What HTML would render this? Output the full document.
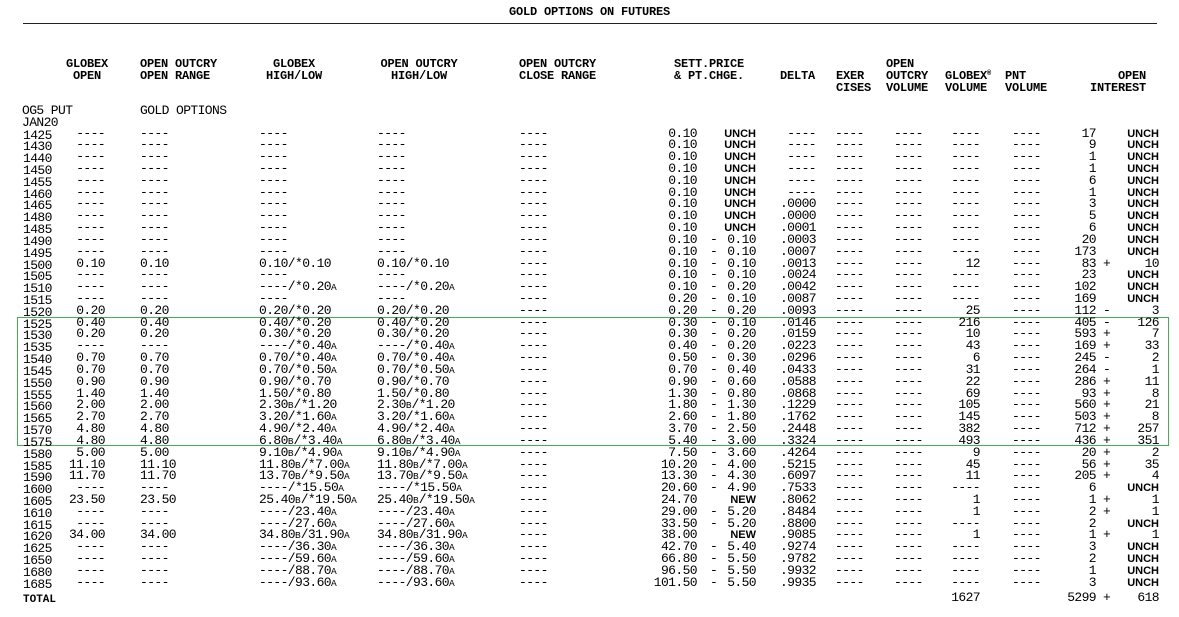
<!DOCTYPE html>
<html><head><meta charset="utf-8">
<style>
*{margin:0;padding:0}
body{width:1179px;height:617px;background:#fff;position:relative;overflow:hidden;font-family:"Liberation Mono",monospace;font-size:13px;letter-spacing:-0.6px;color:#000}
.a{position:absolute;white-space:pre;line-height:12px}
.h{position:absolute;white-space:pre;line-height:12px;font-weight:bold;font-size:12px;letter-spacing:-0.2px}
.r{position:absolute;left:0;width:1179px;height:12px}
.r>*{position:absolute;top:0;white-space:pre;line-height:12px;font-style:normal;font-weight:normal}
.s{left:23px;top:2px!important}
.go{left:45px;width:60px;text-align:right}
.oo{left:140px}
.gh{left:259px}
.oh{left:377px}
.cl{left:519px}
.sp{left:630px;width:67px;text-align:right}
.sg{left:710px}
.ch{left:706px;width:50px;text-align:right}
.de{left:766px;width:50px;text-align:right}
.ex{left:835px}
.ov{left:894px}
.gv{left:930px;width:50px;text-align:right}
.pv{left:1012px}
.oi{left:1046px;width:50px;text-align:right}
.os{left:1103px}
.oc{left:1109px;width:50px;text-align:right}
.u{font-size:11px!important;font-weight:bold!important;font-family:"Liberation Sans",sans-serif;letter-spacing:0}
small{font-size:9.5px;letter-spacing:0}
</style></head><body>
<div class="h" style="left:0;width:1179px;text-align:center;top:6px">GOLD OPTIONS ON FUTURES</div>
<div style="position:absolute;left:23px;top:23px;width:1134px;height:1px;background:#222"></div>

<div class="h" style="left:62px;top:58px;width:50px;text-align:center">GLOBEX
OPEN</div>
<div class="h" style="left:140px;top:58px">OPEN OUTCRY
OPEN RANGE</div>
<div class="h" style="left:264px;top:58px;width:60px;text-align:center">GLOBEX
HIGH/LOW</div>
<div class="h" style="left:379px;top:58px;width:80px;text-align:center">OPEN OUTCRY
HIGH/LOW</div>
<div class="h" style="left:519px;top:58px">OPEN OUTCRY
CLOSE RANGE</div>
<div class="h" style="left:674px;top:58px">SETT.PRICE
&amp; PT.CHGE.</div>
<div class="h" style="left:780px;top:70px">DELTA</div>
<div class="h" style="left:836px;top:70px">EXER
CISES</div>
<div class="h" style="left:886px;top:58px">OPEN
OUTCRY
VOLUME</div>
<div class="h" style="left:945px;top:70px">GLOBEX<span style="font-size:7px;position:relative;top:-4px;line-height:0">®</span>
VOLUME</div>
<div class="h" style="left:1005px;top:70px">PNT
VOLUME</div>
<div class="h" style="left:1086px;top:70px;width:60px;text-align:right">OPEN
INTEREST</div>

<div class="h" style="left:22px;top:105px;font-weight:normal;font-size:13px;letter-spacing:-0.6px">OG5 PUT</div>
<div class="h" style="left:140px;top:105px;font-weight:normal;font-size:13px;letter-spacing:-0.6px">GOLD OPTIONS</div>
<div class="h" style="left:22px;top:117px;font-weight:normal;font-size:13px;letter-spacing:-0.6px">JAN20</div>

<div style="position:absolute;left:17px;top:317px;width:1152px;height:129px;border:1px solid #3cb44b;box-sizing:border-box"></div>

<div class="r" style="top:127.5px"><i class="s">1425</i><i class="go">----</i><i class="oo">----</i><i class="gh">----</i><i class="oh">----</i><i class="cl">----</i><i class="sp">0.10</i><i class="ch u">UNCH</i><i class="de">----</i><i class="ex">----</i><i class="ov">----</i><i class="gv">----</i><i class="pv">----</i><i class="oi">17</i><i class="oc u">UNCH</i></div>
<div class="r" style="top:139.3px"><i class="s">1430</i><i class="go">----</i><i class="oo">----</i><i class="gh">----</i><i class="oh">----</i><i class="cl">----</i><i class="sp">0.10</i><i class="ch u">UNCH</i><i class="de">----</i><i class="ex">----</i><i class="ov">----</i><i class="gv">----</i><i class="pv">----</i><i class="oi">9</i><i class="oc u">UNCH</i></div>
<div class="r" style="top:151.1px"><i class="s">1440</i><i class="go">----</i><i class="oo">----</i><i class="gh">----</i><i class="oh">----</i><i class="cl">----</i><i class="sp">0.10</i><i class="ch u">UNCH</i><i class="de">----</i><i class="ex">----</i><i class="ov">----</i><i class="gv">----</i><i class="pv">----</i><i class="oi">1</i><i class="oc u">UNCH</i></div>
<div class="r" style="top:163px"><i class="s">1450</i><i class="go">----</i><i class="oo">----</i><i class="gh">----</i><i class="oh">----</i><i class="cl">----</i><i class="sp">0.10</i><i class="ch u">UNCH</i><i class="de">----</i><i class="ex">----</i><i class="ov">----</i><i class="gv">----</i><i class="pv">----</i><i class="oi">1</i><i class="oc u">UNCH</i></div>
<div class="r" style="top:174.8px"><i class="s">1455</i><i class="go">----</i><i class="oo">----</i><i class="gh">----</i><i class="oh">----</i><i class="cl">----</i><i class="sp">0.10</i><i class="ch u">UNCH</i><i class="de">----</i><i class="ex">----</i><i class="ov">----</i><i class="gv">----</i><i class="pv">----</i><i class="oi">6</i><i class="oc u">UNCH</i></div>
<div class="r" style="top:186.6px"><i class="s">1460</i><i class="go">----</i><i class="oo">----</i><i class="gh">----</i><i class="oh">----</i><i class="cl">----</i><i class="sp">0.10</i><i class="ch u">UNCH</i><i class="de">----</i><i class="ex">----</i><i class="ov">----</i><i class="gv">----</i><i class="pv">----</i><i class="oi">1</i><i class="oc u">UNCH</i></div>
<div class="r" style="top:198.4px"><i class="s">1465</i><i class="go">----</i><i class="oo">----</i><i class="gh">----</i><i class="oh">----</i><i class="cl">----</i><i class="sp">0.10</i><i class="ch u">UNCH</i><i class="de">.0000</i><i class="ex">----</i><i class="ov">----</i><i class="gv">----</i><i class="pv">----</i><i class="oi">3</i><i class="oc u">UNCH</i></div>
<div class="r" style="top:210.2px"><i class="s">1480</i><i class="go">----</i><i class="oo">----</i><i class="gh">----</i><i class="oh">----</i><i class="cl">----</i><i class="sp">0.10</i><i class="ch u">UNCH</i><i class="de">.0000</i><i class="ex">----</i><i class="ov">----</i><i class="gv">----</i><i class="pv">----</i><i class="oi">5</i><i class="oc u">UNCH</i></div>
<div class="r" style="top:222.1px"><i class="s">1485</i><i class="go">----</i><i class="oo">----</i><i class="gh">----</i><i class="oh">----</i><i class="cl">----</i><i class="sp">0.10</i><i class="ch u">UNCH</i><i class="de">.0001</i><i class="ex">----</i><i class="ov">----</i><i class="gv">----</i><i class="pv">----</i><i class="oi">6</i><i class="oc u">UNCH</i></div>
<div class="r" style="top:233.9px"><i class="s">1490</i><i class="go">----</i><i class="oo">----</i><i class="gh">----</i><i class="oh">----</i><i class="cl">----</i><i class="sp">0.10</i><i class="sg">-</i><i class="ch">0.10</i><i class="de">.0003</i><i class="ex">----</i><i class="ov">----</i><i class="gv">----</i><i class="pv">----</i><i class="oi">20</i><i class="oc u">UNCH</i></div>
<div class="r" style="top:245.7px"><i class="s">1495</i><i class="go">----</i><i class="oo">----</i><i class="gh">----</i><i class="oh">----</i><i class="cl">----</i><i class="sp">0.10</i><i class="sg">-</i><i class="ch">0.10</i><i class="de">.0007</i><i class="ex">----</i><i class="ov">----</i><i class="gv">----</i><i class="pv">----</i><i class="oi">173</i><i class="oc u">UNCH</i></div>
<div class="r" style="top:257.5px"><i class="s">1500</i><i class="go">0.10</i><i class="oo">0.10</i><i class="gh">0.10/*0.10</i><i class="oh">0.10/*0.10</i><i class="cl">----</i><i class="sp">0.10</i><i class="sg">-</i><i class="ch">0.10</i><i class="de">.0013</i><i class="ex">----</i><i class="ov">----</i><i class="gv">12</i><i class="pv">----</i><i class="oi">83</i><i class="os">+</i><i class="oc">10</i></div>
<div class="r" style="top:269.3px"><i class="s">1505</i><i class="go">----</i><i class="oo">----</i><i class="gh">----</i><i class="oh">----</i><i class="cl">----</i><i class="sp">0.10</i><i class="sg">-</i><i class="ch">0.10</i><i class="de">.0024</i><i class="ex">----</i><i class="ov">----</i><i class="gv">----</i><i class="pv">----</i><i class="oi">23</i><i class="oc u">UNCH</i></div>
<div class="r" style="top:281.2px"><i class="s">1510</i><i class="go">----</i><i class="oo">----</i><i class="gh">----/*0.20<small>A</small></i><i class="oh">----/*0.20<small>A</small></i><i class="cl">----</i><i class="sp">0.10</i><i class="sg">-</i><i class="ch">0.20</i><i class="de">.0042</i><i class="ex">----</i><i class="ov">----</i><i class="gv">----</i><i class="pv">----</i><i class="oi">102</i><i class="oc u">UNCH</i></div>
<div class="r" style="top:293px"><i class="s">1515</i><i class="go">----</i><i class="oo">----</i><i class="gh">----</i><i class="oh">----</i><i class="cl">----</i><i class="sp">0.20</i><i class="sg">-</i><i class="ch">0.10</i><i class="de">.0087</i><i class="ex">----</i><i class="ov">----</i><i class="gv">----</i><i class="pv">----</i><i class="oi">169</i><i class="oc u">UNCH</i></div>
<div class="r" style="top:304.8px"><i class="s">1520</i><i class="go">0.20</i><i class="oo">0.20</i><i class="gh">0.20/*0.20</i><i class="oh">0.20/*0.20</i><i class="cl">----</i><i class="sp">0.20</i><i class="sg">-</i><i class="ch">0.20</i><i class="de">.0093</i><i class="ex">----</i><i class="ov">----</i><i class="gv">25</i><i class="pv">----</i><i class="oi">112</i><i class="os">-</i><i class="oc">3</i></div>
<div class="r" style="top:316.6px"><i class="s">1525</i><i class="go">0.40</i><i class="oo">0.40</i><i class="gh">0.40/*0.20</i><i class="oh">0.40/*0.20</i><i class="cl">----</i><i class="sp">0.30</i><i class="sg">-</i><i class="ch">0.10</i><i class="de">.0146</i><i class="ex">----</i><i class="ov">----</i><i class="gv">216</i><i class="pv">----</i><i class="oi">405</i><i class="os">-</i><i class="oc">126</i></div>
<div class="r" style="top:328.4px"><i class="s">1530</i><i class="go">0.20</i><i class="oo">0.20</i><i class="gh">0.30/*0.20</i><i class="oh">0.30/*0.20</i><i class="cl">----</i><i class="sp">0.30</i><i class="sg">-</i><i class="ch">0.20</i><i class="de">.0159</i><i class="ex">----</i><i class="ov">----</i><i class="gv">10</i><i class="pv">----</i><i class="oi">593</i><i class="os">+</i><i class="oc">7</i></div>
<div class="r" style="top:340.3px"><i class="s">1535</i><i class="go">----</i><i class="oo">----</i><i class="gh">----/*0.40<small>A</small></i><i class="oh">----/*0.40<small>A</small></i><i class="cl">----</i><i class="sp">0.40</i><i class="sg">-</i><i class="ch">0.20</i><i class="de">.0223</i><i class="ex">----</i><i class="ov">----</i><i class="gv">43</i><i class="pv">----</i><i class="oi">169</i><i class="os">+</i><i class="oc">33</i></div>
<div class="r" style="top:352.1px"><i class="s">1540</i><i class="go">0.70</i><i class="oo">0.70</i><i class="gh">0.70/*0.40<small>A</small></i><i class="oh">0.70/*0.40<small>A</small></i><i class="cl">----</i><i class="sp">0.50</i><i class="sg">-</i><i class="ch">0.30</i><i class="de">.0296</i><i class="ex">----</i><i class="ov">----</i><i class="gv">6</i><i class="pv">----</i><i class="oi">245</i><i class="os">-</i><i class="oc">2</i></div>
<div class="r" style="top:363.9px"><i class="s">1545</i><i class="go">0.70</i><i class="oo">0.70</i><i class="gh">0.70/*0.50<small>A</small></i><i class="oh">0.70/*0.50<small>A</small></i><i class="cl">----</i><i class="sp">0.70</i><i class="sg">-</i><i class="ch">0.40</i><i class="de">.0433</i><i class="ex">----</i><i class="ov">----</i><i class="gv">31</i><i class="pv">----</i><i class="oi">264</i><i class="os">-</i><i class="oc">1</i></div>
<div class="r" style="top:375.7px"><i class="s">1550</i><i class="go">0.90</i><i class="oo">0.90</i><i class="gh">0.90/*0.70</i><i class="oh">0.90/*0.70</i><i class="cl">----</i><i class="sp">0.90</i><i class="sg">-</i><i class="ch">0.60</i><i class="de">.0588</i><i class="ex">----</i><i class="ov">----</i><i class="gv">22</i><i class="pv">----</i><i class="oi">286</i><i class="os">+</i><i class="oc">11</i></div>
<div class="r" style="top:387.5px"><i class="s">1555</i><i class="go">1.40</i><i class="oo">1.40</i><i class="gh">1.50/*0.80</i><i class="oh">1.50/*0.80</i><i class="cl">----</i><i class="sp">1.30</i><i class="sg">-</i><i class="ch">0.80</i><i class="de">.0868</i><i class="ex">----</i><i class="ov">----</i><i class="gv">69</i><i class="pv">----</i><i class="oi">93</i><i class="os">+</i><i class="oc">8</i></div>
<div class="r" style="top:399.4px"><i class="s">1560</i><i class="go">2.00</i><i class="oo">2.00</i><i class="gh">2.30<small>B</small>/*1.20</i><i class="oh">2.30<small>B</small>/*1.20</i><i class="cl">----</i><i class="sp">1.80</i><i class="sg">-</i><i class="ch">1.30</i><i class="de">.1229</i><i class="ex">----</i><i class="ov">----</i><i class="gv">105</i><i class="pv">----</i><i class="oi">560</i><i class="os">+</i><i class="oc">21</i></div>
<div class="r" style="top:411.2px"><i class="s">1565</i><i class="go">2.70</i><i class="oo">2.70</i><i class="gh">3.20/*1.60<small>A</small></i><i class="oh">3.20/*1.60<small>A</small></i><i class="cl">----</i><i class="sp">2.60</i><i class="sg">-</i><i class="ch">1.80</i><i class="de">.1762</i><i class="ex">----</i><i class="ov">----</i><i class="gv">145</i><i class="pv">----</i><i class="oi">503</i><i class="os">+</i><i class="oc">8</i></div>
<div class="r" style="top:423px"><i class="s">1570</i><i class="go">4.80</i><i class="oo">4.80</i><i class="gh">4.90/*2.40<small>A</small></i><i class="oh">4.90/*2.40<small>A</small></i><i class="cl">----</i><i class="sp">3.70</i><i class="sg">-</i><i class="ch">2.50</i><i class="de">.2448</i><i class="ex">----</i><i class="ov">----</i><i class="gv">382</i><i class="pv">----</i><i class="oi">712</i><i class="os">+</i><i class="oc">257</i></div>
<div class="r" style="top:434.8px"><i class="s">1575</i><i class="go">4.80</i><i class="oo">4.80</i><i class="gh">6.80<small>B</small>/*3.40<small>A</small></i><i class="oh">6.80<small>B</small>/*3.40<small>A</small></i><i class="cl">----</i><i class="sp">5.40</i><i class="sg">-</i><i class="ch">3.00</i><i class="de">.3324</i><i class="ex">----</i><i class="ov">----</i><i class="gv">493</i><i class="pv">----</i><i class="oi">436</i><i class="os">+</i><i class="oc">351</i></div>
<div class="r" style="top:446.6px"><i class="s">1580</i><i class="go">5.00</i><i class="oo">5.00</i><i class="gh">9.10<small>B</small>/*4.90<small>A</small></i><i class="oh">9.10<small>B</small>/*4.90<small>A</small></i><i class="cl">----</i><i class="sp">7.50</i><i class="sg">-</i><i class="ch">3.60</i><i class="de">.4264</i><i class="ex">----</i><i class="ov">----</i><i class="gv">9</i><i class="pv">----</i><i class="oi">20</i><i class="os">+</i><i class="oc">2</i></div>
<div class="r" style="top:458.5px"><i class="s">1585</i><i class="go">11.10</i><i class="oo">11.10</i><i class="gh">11.80<small>B</small>/*7.00<small>A</small></i><i class="oh">11.80<small>B</small>/*7.00<small>A</small></i><i class="cl">----</i><i class="sp">10.20</i><i class="sg">-</i><i class="ch">4.00</i><i class="de">.5215</i><i class="ex">----</i><i class="ov">----</i><i class="gv">45</i><i class="pv">----</i><i class="oi">56</i><i class="os">+</i><i class="oc">35</i></div>
<div class="r" style="top:470.3px"><i class="s">1590</i><i class="go">11.70</i><i class="oo">11.70</i><i class="gh">13.70<small>B</small>/*9.50<small>A</small></i><i class="oh">13.70<small>B</small>/*9.50<small>A</small></i><i class="cl">----</i><i class="sp">13.30</i><i class="sg">-</i><i class="ch">4.30</i><i class="de">.6097</i><i class="ex">----</i><i class="ov">----</i><i class="gv">11</i><i class="pv">----</i><i class="oi">205</i><i class="os">+</i><i class="oc">4</i></div>
<div class="r" style="top:482.1px"><i class="s">1600</i><i class="go">----</i><i class="oo">----</i><i class="gh">----/*15.50<small>A</small></i><i class="oh">----/*15.50<small>A</small></i><i class="cl">----</i><i class="sp">20.60</i><i class="sg">-</i><i class="ch">4.90</i><i class="de">.7533</i><i class="ex">----</i><i class="ov">----</i><i class="gv">----</i><i class="pv">----</i><i class="oi">6</i><i class="oc u">UNCH</i></div>
<div class="r" style="top:493.9px"><i class="s">1605</i><i class="go">23.50</i><i class="oo">23.50</i><i class="gh">25.40<small>B</small>/*19.50<small>A</small></i><i class="oh">25.40<small>B</small>/*19.50<small>A</small></i><i class="cl">----</i><i class="sp">24.70</i><i class="ch u">NEW</i><i class="de">.8062</i><i class="ex">----</i><i class="ov">----</i><i class="gv">1</i><i class="pv">----</i><i class="oi">1</i><i class="os">+</i><i class="oc">1</i></div>
<div class="r" style="top:505.7px"><i class="s">1610</i><i class="go">----</i><i class="oo">----</i><i class="gh">----/23.40<small>A</small></i><i class="oh">----/23.40<small>A</small></i><i class="cl">----</i><i class="sp">29.00</i><i class="sg">-</i><i class="ch">5.20</i><i class="de">.8484</i><i class="ex">----</i><i class="ov">----</i><i class="gv">1</i><i class="pv">----</i><i class="oi">2</i><i class="os">+</i><i class="oc">1</i></div>
<div class="r" style="top:517.6px"><i class="s">1615</i><i class="go">----</i><i class="oo">----</i><i class="gh">----/27.60<small>A</small></i><i class="oh">----/27.60<small>A</small></i><i class="cl">----</i><i class="sp">33.50</i><i class="sg">-</i><i class="ch">5.20</i><i class="de">.8800</i><i class="ex">----</i><i class="ov">----</i><i class="gv">----</i><i class="pv">----</i><i class="oi">2</i><i class="oc u">UNCH</i></div>
<div class="r" style="top:529.4px"><i class="s">1620</i><i class="go">34.00</i><i class="oo">34.00</i><i class="gh">34.80<small>B</small>/31.90<small>A</small></i><i class="oh">34.80<small>B</small>/31.90<small>A</small></i><i class="cl">----</i><i class="sp">38.00</i><i class="ch u">NEW</i><i class="de">.9085</i><i class="ex">----</i><i class="ov">----</i><i class="gv">1</i><i class="pv">----</i><i class="oi">1</i><i class="os">+</i><i class="oc">1</i></div>
<div class="r" style="top:541.2px"><i class="s">1625</i><i class="go">----</i><i class="oo">----</i><i class="gh">----/36.30<small>A</small></i><i class="oh">----/36.30<small>A</small></i><i class="cl">----</i><i class="sp">42.70</i><i class="sg">-</i><i class="ch">5.40</i><i class="de">.9274</i><i class="ex">----</i><i class="ov">----</i><i class="gv">----</i><i class="pv">----</i><i class="oi">3</i><i class="oc u">UNCH</i></div>
<div class="r" style="top:553px"><i class="s">1650</i><i class="go">----</i><i class="oo">----</i><i class="gh">----/59.60<small>A</small></i><i class="oh">----/59.60<small>A</small></i><i class="cl">----</i><i class="sp">66.80</i><i class="sg">-</i><i class="ch">5.50</i><i class="de">.9782</i><i class="ex">----</i><i class="ov">----</i><i class="gv">----</i><i class="pv">----</i><i class="oi">2</i><i class="oc u">UNCH</i></div>
<div class="r" style="top:564.8px"><i class="s">1680</i><i class="go">----</i><i class="oo">----</i><i class="gh">----/88.70<small>A</small></i><i class="oh">----/88.70<small>A</small></i><i class="cl">----</i><i class="sp">96.50</i><i class="sg">-</i><i class="ch">5.50</i><i class="de">.9932</i><i class="ex">----</i><i class="ov">----</i><i class="gv">----</i><i class="pv">----</i><i class="oi">1</i><i class="oc u">UNCH</i></div>
<div class="r" style="top:576.7px"><i class="s">1685</i><i class="go">----</i><i class="oo">----</i><i class="gh">----/93.60<small>A</small></i><i class="oh">----/93.60<small>A</small></i><i class="cl">----</i><i class="sp">101.50</i><i class="sg">-</i><i class="ch">5.50</i><i class="de">.9935</i><i class="ex">----</i><i class="ov">----</i><i class="gv">----</i><i class="pv">----</i><i class="oi">3</i><i class="oc u">UNCH</i></div>
<div class="r" style="top:592px"><i class="s" style="font-weight:bold!important;font-size:11px;letter-spacing:0">TOTAL</i><i class="gv">1627</i><i class="oi">5299</i><i class="os">+</i><i class="oc">618</i></div>
</body></html>
